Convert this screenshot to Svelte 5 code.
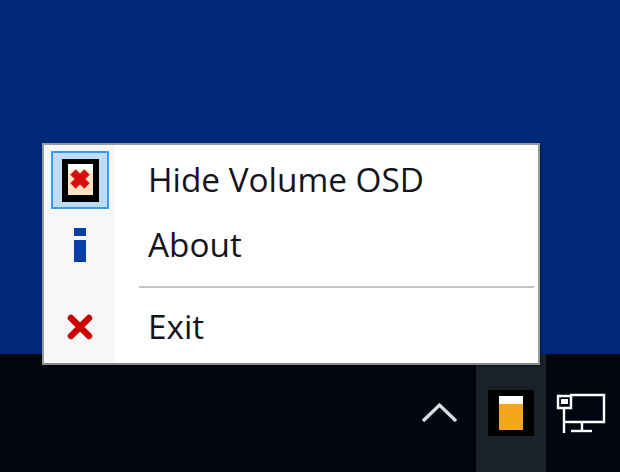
<script>
  const items = [
    { label: 'Hide Volume OSD', icon: 'hide' },
    { label: 'About', icon: 'info' },
    { label: 'Exit', icon: 'exit' }
  ]
</script>

<div class="screen">
  <div class="desktop"></div>

  <div class="taskbar">
    <svg class="chevron" width="40" height="24" viewBox="0 0 40 24">
      <path d="M3 19 L19.500 3 L36 19" fill="none" stroke="#dcdcdf" stroke-width="3.400" />
    </svg>
    <div class="tray-active">
      <div class="tray-icon">
        <div class="level"></div>
      </div>
    </div>
    <svg class="network" width="50" height="42" viewBox="0 0 50 42">
      <g fill="none" stroke="#fff" stroke-width="2.400">
        <path d="M14 2 H48 V29 H14" />
        <path d="M2 3 H15 V15 H2 Z" />
        <path d="M8 15 V40" />
        <path d="M8 29 H14" />
        <path d="M26 29 V38" />
        <path d="M15 38 H36" />
      </g>
      <rect x="5" y="6" width="7" height="5" fill="#fff" />
    </svg>
  </div>

  <div class="menu">
    <div class="gutter"></div>
    <div class="rows">
      {#each items as item, i}
        {#if i === 2}
          <div class="separator"></div>
        {/if}
        <div class="row {item.icon}">
          <div class="icon-cell" class:checked={item.icon === 'hide'}>
            {#if item.icon === 'hide'}
              <div class="hide-icon">
                <svg width="20" height="20" viewBox="0 0 20 20">
                  <path d="M3 3 L17 17 M17 3 L3 17" stroke="#d80f0f" stroke-width="7.500" />
                </svg>
              </div>
            {:else if item.icon === 'info'}
              <div class="info-icon">
                <span class="dot"></span>
                <span class="stem"></span>
              </div>
            {:else}
              <svg width="26" height="26" viewBox="0 0 26 26">
                <path d="M4 4 L22 22 M22 4 L4 22" stroke="#cc0000" stroke-width="6.500" stroke-linecap="round" />
              </svg>
            {/if}
          </div>
          <span class="label">{item.label}</span>
        </div>
      {/each}
    </div>
  </div>
</div>

<style>
  :global(body) {
    margin: 0;
    background: #020611;
  }

  .screen {
    position: relative;
    width: 620px;
    height: 472px;
    overflow: hidden;
    display: flex;
    flex-direction: column;
    font-family: "Open Sans", "Noto Sans", sans-serif;
  }

  .desktop {
    flex: 1;
    background: #002878;
  }

  .taskbar {
    height: 118px;
    background: #020611;
    display: flex;
    align-items: flex-start;
    padding-left: 420px;
    box-sizing: border-box;
  }

  .chevron {
    margin-top: 48px;
  }

  .tray-active {
    width: 70px;
    height: 118px;
    margin-left: 16px;
    background: #1a2129;
    display: flex;
    justify-content: center;
    padding-top: 36px;
    box-sizing: border-box;
  }

  .tray-icon {
    width: 46px;
    height: 46px;
    background: #000;
    display: flex;
    align-items: center;
    justify-content: center;
  }

  .level {
    width: 24px;
    height: 34px;
    background: linear-gradient(#fff 0 8px, #f5a71c 8px);
  }

  .network {
    margin: 39px 0 0 10px;
  }

  .menu {
    position: absolute;
    left: 42px;
    top: 143px;
    width: 498px;
    height: 222px;
    box-sizing: border-box;
    background: #fff;
    border: 2px solid #9a9a9a;
    border-bottom-color: #8a8a8a;
    box-shadow: 1px 1px 2px rgba(0, 0, 0, 0.35);
    display: flex;
  }

  .gutter {
    position: absolute;
    left: 0;
    top: 0;
    bottom: 0;
    width: 71px;
    background: #f7f7f7;
  }

  .rows {
    position: relative;
    flex: 1;
    padding-top: 5px;
  }

  .row {
    display: flex;
    align-items: center;
    height: 60px;
    margin-bottom: 5px;
  }

  .row.exit {
    height: 50px;
    margin-bottom: 0;
  }

  .icon-cell {
    width: 58px;
    height: 58px;
    margin-left: 7px;
    box-sizing: border-box;
    display: flex;
    align-items: center;
    justify-content: center;
    flex-shrink: 0;
  }

  .icon-cell.checked {
    background: #bedcf5;
    border: 2px solid #3a9cec;
  }

  .hide-icon {
    width: 37px;
    height: 43px;
    box-sizing: border-box;
    border: 6px solid #000;
    border-top-width: 5px;
    border-bottom-width: 7px;
    background: linear-gradient(#fff 0 4px, #fde2c4 10px);
    display: flex;
    align-items: center;
    justify-content: center;
  }

  .hide-icon svg {
    display: block;
  }

  .info-icon {
    display: flex;
    flex-direction: column;
    align-items: center;
    gap: 4px;
    margin-top: -1px;
  }

  .dot {
    width: 12px;
    height: 8px;
    background: #0a3ea8;
  }

  .stem {
    width: 12px;
    height: 22px;
    background: #0a3ea8;
  }

  .label {
    margin-left: 39px;
    margin-bottom: 3px;
    font-size: 33.3px;
    line-height: 40px;
    color: #14141c;
    white-space: nowrap;
  }

  .separator {
    height: 2px;
    margin: 11px 4px 14px 95px;
    background: #c4c4c4;
  }
</style>
